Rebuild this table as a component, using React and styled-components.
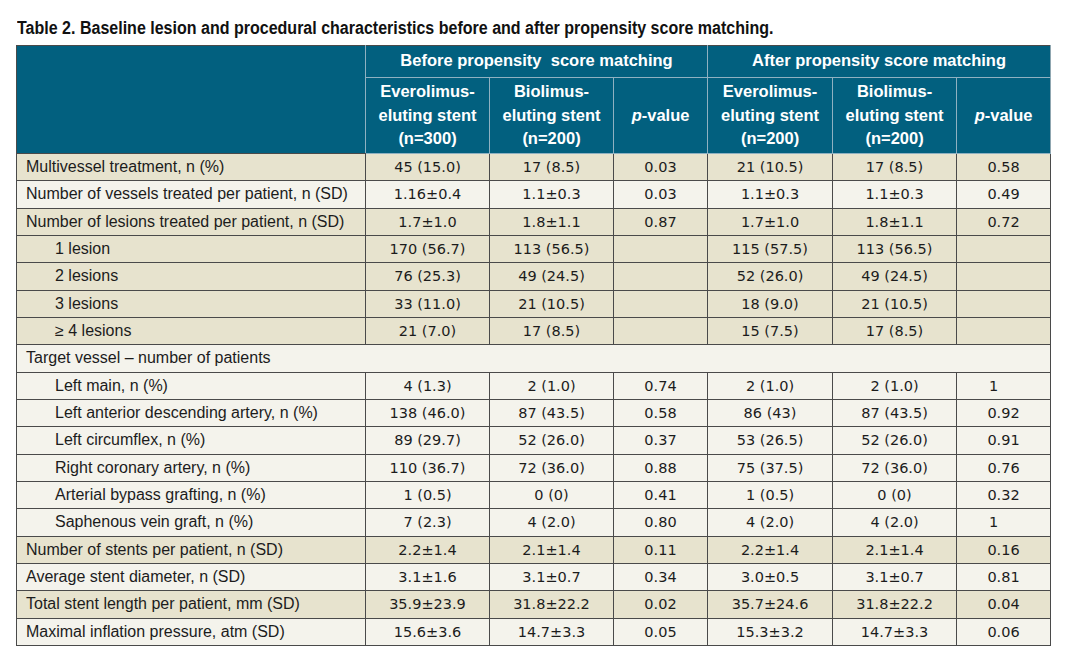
import React from "react";
import styled, { createGlobalStyle } from "styled-components";

const Global = createGlobalStyle`
  html, body { margin: 0; padding: 0; background: #ffffff; }
  body { font-family: "Liberation Sans", Arial, sans-serif; }
`;

const Page = styled.div`
  width: 1071px;
  height: 665px;
  box-sizing: border-box;
  padding: 18px 0 0 16px;
  background: #ffffff;
`;

const Title = styled.h1`
  margin: 0 0 7px 1px;
  font-family: "Liberation Sans", Arial, sans-serif;
  font-weight: 700;
  font-size: 18px;
  line-height: 20px;
  color: #111;
  white-space: nowrap;
  transform: scaleX(0.89);
  transform-origin: left center;
`;

const Table = styled.table`
  width: 1034px;
  border-collapse: collapse;
  table-layout: fixed;
  border: 1px solid #4a4a4a;
`;

const HeadCell = styled.th`
  background: #02607f;
  color: #ffffff;
  font-family: "Liberation Sans", Arial, sans-serif;
  font-weight: 700;
  font-size: 16.5px;
  line-height: 23.5px;
  text-align: center;
  padding: ${(p) => (p.$group ? "3px 4px 4px" : "2px 4px 2px")};
  height: ${(p) => (p.$group ? "24px" : "71px")};
  border: 1px solid #8fb1c1;
  border-top-color: #4a4a4a;
  vertical-align: middle;
  &:last-child { border-right-color: #8fa6b0; }
  em { font-style: italic; }
`;

const BlankHead = styled(HeadCell)`
  border-left-color: #4a4a4a;
  border-bottom-color: #4a4a4a;
`;

const Row = styled.tr`
  background: ${(p) => (p.$tone === "dark" ? "#e7e3ce" : "#f4f3ec")};
  height: 27.33px;
`;

const LabelCell = styled.td`
  font-family: "Liberation Sans", Arial, sans-serif;
  font-size: 16px;
  color: #1c1c1c;
  padding: 0 4px 0 ${(p) => (p.$indent ? "38px" : "9px")};
  border: 1px solid #4a4a4a;
  white-space: nowrap;
  vertical-align: middle;
`;

const DataCell = styled.td`
  font-family: "DejaVu Sans", "Liberation Sans", sans-serif;
  font-size: 14.5px;
  color: #1c1c1c;
  text-align: ${(p) => (p.$left ? "left" : "center")};
  padding: 0 2px 0 ${(p) => (p.$left ? "32px" : "2px")};
  border: 1px solid #4a4a4a;
  white-space: nowrap;
  vertical-align: middle;
`;

const SpanCell = styled.td`
  font-family: "Liberation Sans", Arial, sans-serif;
  font-size: 16px;
  color: #1c1c1c;
  padding: 0 0 0 9px;
  border: 1px solid #4a4a4a;
  vertical-align: middle;
`;

const widths = [349, 124, 124, 94, 125, 124, 94];

const rows = [
  { label: "Multivessel treatment, n (%)", tone: "dark", v: ["45 (15.0)", "17 (8.5)", "0.03", "21 (10.5)", "17 (8.5)", "0.58"] },
  { label: "Number of vessels treated per patient, n (SD)", tone: "light", v: ["1.16±0.4", "1.1±0.3", "0.03", "1.1±0.3", "1.1±0.3", "0.49"] },
  { label: "Number of lesions treated per patient, n (SD)", tone: "dark", v: ["1.7±1.0", "1.8±1.1", "0.87", "1.7±1.0", "1.8±1.1", "0.72"] },
  { label: "1 lesion", indent: true, tone: "dark", v: ["170 (56.7)", "113 (56.5)", "", "115 (57.5)", "113 (56.5)", ""] },
  { label: "2 lesions", indent: true, tone: "dark", v: ["76 (25.3)", "49 (24.5)", "", "52 (26.0)", "49 (24.5)", ""] },
  { label: "3 lesions", indent: true, tone: "dark", v: ["33 (11.0)", "21 (10.5)", "", "18 (9.0)", "21 (10.5)", ""] },
  { label: "≥ 4 lesions", indent: true, tone: "dark", v: ["21 (7.0)", "17 (8.5)", "", "15 (7.5)", "17 (8.5)", ""] },
  { label: "Target vessel – number of patients", tone: "light", span: true },
  { label: "Left main, n (%)", indent: true, tone: "light", v: ["4 (1.3)", "2 (1.0)", "0.74", "2 (1.0)", "2 (1.0)", "1"], lastLeft: true },
  { label: "Left anterior descending artery, n (%)", indent: true, tone: "light", v: ["138 (46.0)", "87 (43.5)", "0.58", "86 (43)", "87 (43.5)", "0.92"] },
  { label: "Left circumflex, n (%)", indent: true, tone: "light", v: ["89 (29.7)", "52 (26.0)", "0.37", "53 (26.5)", "52 (26.0)", "0.91"] },
  { label: "Right coronary artery, n (%)", indent: true, tone: "light", v: ["110 (36.7)", "72 (36.0)", "0.88", "75 (37.5)", "72 (36.0)", "0.76"] },
  { label: "Arterial bypass grafting, n (%)", indent: true, tone: "light", v: ["1 (0.5)", "0 (0)", "0.41", "1 (0.5)", "0 (0)", "0.32"] },
  { label: "Saphenous vein graft, n (%)", indent: true, tone: "light", v: ["7 (2.3)", "4 (2.0)", "0.80", "4 (2.0)", "4 (2.0)", "1"], lastLeft: true },
  { label: "Number of stents per patient, n (SD)", tone: "dark", v: ["2.2±1.4", "2.1±1.4", "0.11", "2.2±1.4", "2.1±1.4", "0.16"] },
  { label: "Average stent diameter, n (SD)", tone: "light", v: ["3.1±1.6", "3.1±0.7", "0.34", "3.0±0.5", "3.1±0.7", "0.81"] },
  { label: "Total stent length per patient, mm (SD)", tone: "dark", v: ["35.9±23.9", "31.8±22.2", "0.02", "35.7±24.6", "31.8±22.2", "0.04"] },
  { label: "Maximal inflation pressure, atm (SD)", tone: "light", v: ["15.6±3.6", "14.7±3.3", "0.05", "15.3±3.2", "14.7±3.3", "0.06"] },
];

const StudyHead = ({ name, n }) => (
  <HeadCell>
    {name}-<br />
    eluting stent<br />
    (n={n})
  </HeadCell>
);

export default function App() {
  return (
    <>
      <Global />
      <Page>
        <Title>Table 2. Baseline lesion and procedural characteristics before and after propensity score matching.</Title>
        <Table>
          <colgroup>
            {widths.map((w, i) => (
              <col key={i} style={{ width: w }} />
            ))}
          </colgroup>
          <thead>
            <tr>
              <BlankHead rowSpan={2} />
              <HeadCell $group colSpan={3}>Before propensity&nbsp; score matching</HeadCell>
              <HeadCell $group colSpan={3}>After propensity score matching</HeadCell>
            </tr>
            <tr>
              <StudyHead name="Everolimus" n="300" />
              <StudyHead name="Biolimus" n="200" />
              <HeadCell><em>p</em>-value</HeadCell>
              <StudyHead name="Everolimus" n="200" />
              <StudyHead name="Biolimus" n="200" />
              <HeadCell><em>p</em>-value</HeadCell>
            </tr>
          </thead>
          <tbody>
            {rows.map((r, i) =>
              r.span ? (
                <Row key={i} $tone={r.tone}>
                  <SpanCell colSpan={7}>{r.label}</SpanCell>
                </Row>
              ) : (
                <Row key={i} $tone={r.tone}>
                  <LabelCell $indent={r.indent}>{r.label}</LabelCell>
                  {r.v.map((v, j) => (
                    <DataCell key={j} $left={r.lastLeft && j === 5}>{v}</DataCell>
                  ))}
                </Row>
              )
            )}
          </tbody>
        </Table>
      </Page>
    </>
  );
}
